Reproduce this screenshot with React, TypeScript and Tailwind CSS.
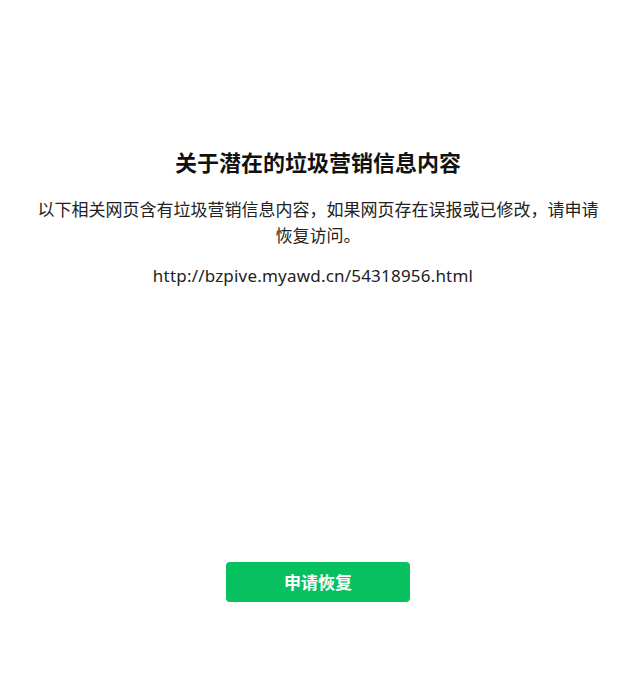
import React from 'react';

const font = { fontFamily: '"Noto Sans CJK SC", "Noto Sans", sans-serif' };
const latin = { fontFamily: '"Noto Sans", "Noto Sans CJK SC", sans-serif' };

export default function App() {
  return (
    <div className="min-h-[698px] w-full bg-white flex flex-col items-center px-[36px]" style={font}>
      {/* 标题 */}
      <h1 className="pt-[146px] text-[22px] leading-[30px] font-bold text-[#111111] text-center">
        关于潜在的垃圾营销信息内容
      </h1>

      {/* 说明 */}
      <p className="mt-[20px] text-[17px] leading-[26px] text-[#222222] text-center">
        以下相关网页含有垃圾营销信息内容，如果网页存在误报或已修改，请申请恢复访问。
      </p>

      {/* 链接 */}
      <p className="mt-[15px] pr-[10px] text-[17px] leading-[26px] tracking-[0.2px] text-[#222222] text-center" style={latin}>
        http://bzpive.myawd.cn/54318956.html
      </p>

      {/* 按钮 */}
      <button className="mt-[273px] w-[184px] h-[40px] rounded-[4px] bg-[#07c160] text-white text-[17px] font-bold">
        申请恢复
      </button>
    </div>
  );
}
